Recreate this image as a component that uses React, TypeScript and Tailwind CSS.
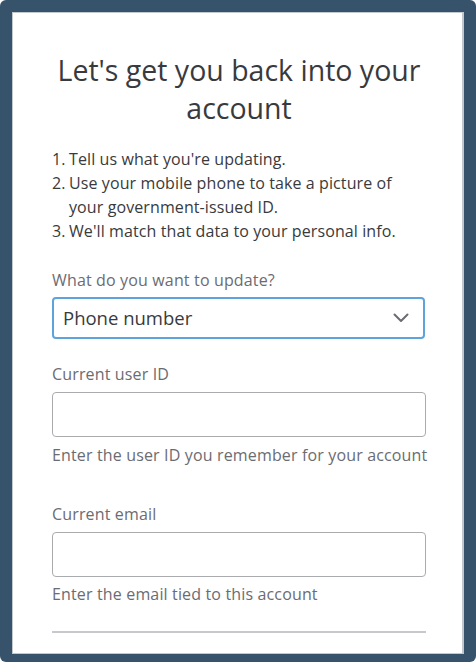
import React from "react";

export default function App() {
  const font = { fontFamily: "'Open Sans', 'Noto Sans', sans-serif" };
  return (
    <div className="w-[476px] h-[662px] bg-[#36536b] rounded-[6px] pt-[12px] pl-[12px] pr-[12px] pb-[8px]" style={font}>
      <div className="h-full bg-white border border-[#c3c8cd] border-r-2 overflow-hidden pl-[39px] pr-[36px] pt-[38px]">
        <h1 className="text-center text-[28.5px] leading-[38px] text-[#393a3d] font-normal">
          Let's get you back into your account
        </h1>
        <ol className="mt-[20px] text-[16px] leading-[24px] tracking-[0.1px] text-[#393a3d]">
          <li className="flex"><span className="w-[17px] shrink-0">1.</span><span>Tell us what you're updating.</span></li>
          <li className="flex"><span className="w-[17px] shrink-0">2.</span><span>Use your mobile phone to take a picture of your government-issued ID.</span></li>
          <li className="flex"><span className="w-[17px] shrink-0">3.</span><span>We'll match that data to your personal info.</span></li>
        </ol>
        <div className="mt-[25px] text-[16px] leading-[24px] tracking-[0.15px] text-[#6b6c72]">What do you want to update?</div>
        <div className="mt-[5px] h-[42px] rounded-[4px] border-2 border-[#5ea3dc] flex items-center justify-between pl-[9px] pr-[14px] mr-[1px]">
          <span className="text-[18.5px] text-[#393a3d]">Phone number</span>
          <svg width="16" height="10" viewBox="0 0 16 10" fill="none">
            <path d="M1.5 1.5 L8 8 L14.5 1.5" stroke="#6b6c72" strokeWidth="2" strokeLinecap="round" strokeLinejoin="round" />
          </svg>
        </div>
        <div className="mt-[23px] text-[16px] leading-[24px] tracking-[0.15px] text-[#6b6c72]">Current user ID</div>
        <div className="mt-[6px] h-[45px] rounded-[4px] border border-[#a9abae]" />
        <div className="mt-[6px] text-[16px] leading-[24px] tracking-[0.15px] text-[#6b6c72] whitespace-nowrap">Enter the user ID you remember for your account</div>
        <div className="mt-[35px] text-[16px] leading-[24px] tracking-[0.15px] text-[#6b6c72]">Current email</div>
        <div className="mt-[6px] h-[45px] rounded-[4px] border border-[#a9abae]" />
        <div className="mt-[5px] text-[16px] leading-[24px] tracking-[0.15px] text-[#6b6c72]">Enter the email tied to this account</div>
        <div className="mt-[25px] h-[2px] bg-[#c6c8cb]" />
      </div>
    </div>
  );
}
